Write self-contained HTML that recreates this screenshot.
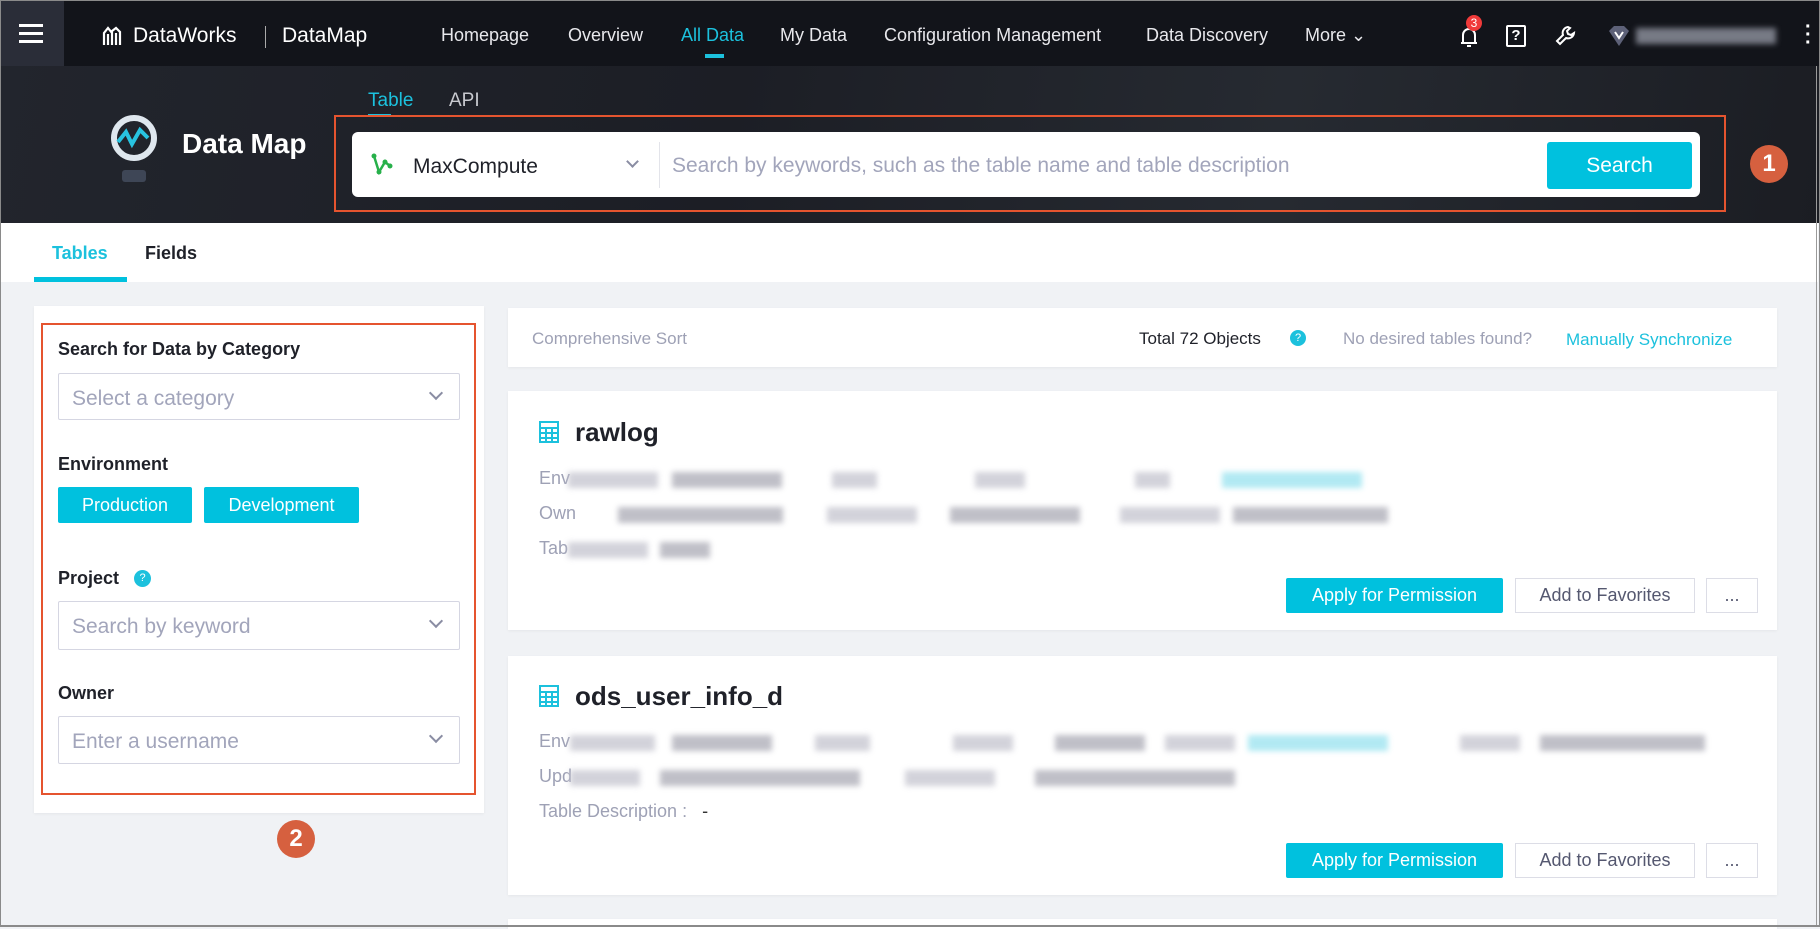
<!DOCTYPE html>
<html><head><meta charset="utf-8"><style>
*{box-sizing:border-box;margin:0;padding:0}
body{width:1820px;height:927px;overflow:hidden;background:#f0f2f5;font-family:"Liberation Sans",sans-serif;position:relative}
.a{position:absolute}
.nav{left:0;top:0;width:1820px;height:66px;background:#12141a}
.navi{top:25px;font-size:18px;color:#e8e8ec;white-space:nowrap}
.banner{left:0;top:66px;width:1820px;height:157px;background:linear-gradient(100deg,#22252d 0%,#1c1e25 40%,#262a31 70%,#1b1d23 100%)}
.lbl{font-size:18px;font-weight:bold;color:#1f2129}
.sel{background:#fff;border:1px solid #d5d6e2;border-radius:2px;font-size:21px;color:#a2a5bb;padding:13px 13px 0}
.chev{position:absolute;right:18px;top:14px;width:10px;height:10px;border-right:2px solid #8a8da3;border-bottom:2px solid #8a8da3;transform:rotate(45deg)}
.btnc{background:#00c1de;color:#fff;font-size:18px;text-align:center}
.card{background:#fff;box-shadow:0 1px 3px rgba(0,0,0,.05)}
.blur{position:absolute;height:16px;background:#c8c8d2;filter:blur(3px);opacity:.8}
.gl{font-size:18px;color:#9ea1b5}
.ob{border:1px solid #dcdde6;background:#fff;color:#555870;font-size:18px;text-align:center}
.circ{border-radius:50%;background:#d6603f;color:#fff;font-weight:bold;font-size:24px;text-align:center}
</style></head><body>
<div class="a nav"></div>
<div class="a" style="left:0;top:0;width:64px;height:66px;background:#2a2d38"></div>
<div class="a" style="left:19px;top:24px;width:24px;height:3px;background:#fff;box-shadow:0 8px 0 #fff,0 16px 0 #fff"></div>
<svg class="a" style="left:101px;top:25px" width="22" height="22" viewBox="0 0 22 22"><path d="M3 20V8l4-5 4 5v12M11 20V6l4-3 4 4v13M7 20V9M15 20V8" stroke="#fff" stroke-width="2.2" fill="none"/></svg>
<div class="a" style="left:133px;top:24px;font-size:21px;color:#fff">DataWorks</div>
<div class="a" style="left:265px;top:26px;width:1px;height:22px;background:#aaa"></div>
<div class="a" style="left:282px;top:24px;font-size:21px;color:#fff">DataMap</div>
<div class="a navi" style="left:441px">Homepage</div>
<div class="a navi" style="left:568px">Overview</div>
<div class="a navi" style="left:681px;color:#1cc1dd">All Data</div>
<div class="a" style="left:705px;top:54px;width:19px;height:4px;background:#1cc1dd"></div>
<div class="a navi" style="left:780px">My Data</div>
<div class="a navi" style="left:884px">Configuration Management</div>
<div class="a navi" style="left:1146px">Data Discovery</div>
<div class="a navi" style="left:1305px">More ⌄</div>
<svg class="a" style="left:1456px;top:24px" width="26" height="26" viewBox="0 0 26 26"><path d="M7 19V11a6 6 0 0 1 12 0v8zM5 19h16M11 22h4" stroke="#fff" stroke-width="2" fill="none"/></svg>
<div class="a" style="left:1466px;top:15px;width:16px;height:16px;border-radius:50%;background:#f03a3a;color:#fff;font-size:12px;text-align:center;line-height:16px">3</div>
<div class="a" style="left:1506px;top:25px;width:20px;height:22px;border:2px solid #fff;border-radius:2px;color:#fff;font-size:15px;font-weight:bold;text-align:center;line-height:18px">?</div>
<svg class="a" style="left:1554px;top:24px" width="24" height="24" viewBox="0 0 24 24"><path d="M14 3a6 6 0 0 0-5 8L3 17l3 3 6-6a6 6 0 0 0 8-5l-3 2-3-1-1-3 3-3z" stroke="#fff" stroke-width="2" fill="none"/></svg>
<svg class="a" style="left:1608px;top:26px" width="22" height="20" viewBox="0 0 22 20"><path d="M1 5l5-5h10l5 5-10 15z" fill="#5d6178"/><path d="M7 6l4 6 4-6" stroke="#fff" stroke-width="2" fill="none"/></svg>
<div class="a" style="left:1636px;top:28px;width:140px;height:16px;background:#777a85;filter:blur(3px)"></div>
<div class="a" style="left:1805px;top:23px;color:#fff;font-size:20px;font-weight:bold;line-height:8px">·<br>·<br>·</div>

<div class="a banner"></div>
<svg class="a" style="left:108px;top:112px" width="56" height="76" viewBox="0 0 56 76"><circle cx="26" cy="26" r="20" stroke="#dfe7ee" stroke-width="6" fill="none"/><path d="M10 30l8-10 6 12 8-14 8 8" stroke="#28c3e0" stroke-width="4" fill="none"/><rect x="14" y="58" width="24" height="12" rx="3" fill="#3e4656"/></svg>
<div class="a" style="left:182px;top:128px;font-size:28px;font-weight:bold;color:#fff">Data Map</div>
<div class="a" style="left:368px;top:90px;font-size:19px;color:#1cc1dd">Table</div>
<div class="a" style="left:368px;top:114px;width:23px;height:3px;background:#1cc1dd"></div>
<div class="a" style="left:449px;top:90px;font-size:19px;color:#c8c9cf">API</div>
<div class="a" style="left:334px;top:115px;width:1392px;height:97px;border:2px solid #e5542f"></div>
<div class="a" style="left:352px;top:132px;width:1348px;height:65px;background:#fff;border-radius:6px"></div>
<svg class="a" style="left:371px;top:152px" width="22" height="24" viewBox="0 0 22 24"><path d="M3 4l5 16 6-10 5 4" stroke="#27b04a" stroke-width="2.5" fill="none"/><circle cx="3" cy="4" r="2.5" fill="#27b04a"/><circle cx="8" cy="20" r="2.5" fill="#27b04a"/><circle cx="14" cy="10" r="2.5" fill="#27b04a"/><circle cx="19" cy="14" r="2.5" fill="#27b04a"/></svg>
<div class="a" style="left:413px;top:155px;font-size:21px;color:#1f2129">MaxCompute</div>
<div class="a" style="left:628px;top:157px;width:9px;height:9px;border-right:2px solid #8a8da3;border-bottom:2px solid #8a8da3;transform:rotate(45deg)"></div>
<div class="a" style="left:659px;top:142px;width:1px;height:46px;background:#e3e4ea"></div>
<div class="a" style="left:672px;top:154px;font-size:21px;color:#a2a5bb">Search by keywords, such as the table name and table description</div>
<div class="a btnc" style="left:1547px;top:142px;width:145px;height:47px;line-height:47px;border-radius:3px;font-size:21px">Search</div>
<div class="a circ" style="left:1750px;top:145px;width:38px;height:38px;line-height:38px">1</div>

<div class="a" style="left:0;top:223px;width:1818px;height:59px;background:#fff"></div>
<div class="a" style="left:52px;top:243px;font-size:18px;font-weight:bold;color:#1cc1dd">Tables</div>
<div class="a" style="left:34px;top:277px;width:93px;height:5px;background:#00c1de"></div>
<div class="a" style="left:145px;top:243px;font-size:18px;font-weight:bold;color:#1f2129">Fields</div>

<div class="a card" style="left:34px;top:306px;width:450px;height:507px"></div>
<div class="a" style="left:41px;top:323px;width:435px;height:472px;border:2px solid #e5542f"></div>
<div class="a lbl" style="left:58px;top:339px">Search for Data by Category</div>
<div class="a sel" style="left:58px;top:373px;width:402px;height:47px">Select a category<span class="chev"></span></div>
<div class="a lbl" style="left:58px;top:454px">Environment</div>
<div class="a btnc" style="left:58px;top:487px;width:134px;height:36px;line-height:36px;border-radius:2px">Production</div>
<div class="a btnc" style="left:204px;top:487px;width:155px;height:36px;line-height:36px;border-radius:2px">Development</div>
<div class="a lbl" style="left:58px;top:568px">Project</div>
<div class="a" style="left:134px;top:570px;width:17px;height:17px;border-radius:50%;background:#1cc1dd;color:#fff;font-size:11px;text-align:center;line-height:17px">?</div>
<div class="a sel" style="left:58px;top:601px;width:402px;height:49px">Search by keyword<span class="chev"></span></div>
<div class="a lbl" style="left:58px;top:683px">Owner</div>
<div class="a sel" style="left:58px;top:716px;width:402px;height:48px">Enter a username<span class="chev"></span></div>
<div class="a circ" style="left:277px;top:820px;width:38px;height:38px;line-height:38px">2</div>

<div class="a card" style="left:508px;top:308px;width:1269px;height:59px"></div>
<div class="a gl" style="left:532px;top:329px;font-size:17px">Comprehensive Sort</div>
<div class="a" style="left:1139px;top:329px;font-size:17px;color:#1f2129">Total 72 Objects</div>
<div class="a" style="left:1290px;top:330px;width:16px;height:16px;border-radius:50%;background:#1cc1dd;color:#fff;font-size:11px;text-align:center;line-height:16px">?</div>
<div class="a gl" style="left:1343px;top:329px;font-size:17px">No desired tables found?</div>
<div class="a" style="left:1566px;top:330px;font-size:17px;color:#1cc1dd">Manually Synchronize</div>

<div class="a card" style="left:508px;top:391px;width:1269px;height:239px"></div>
<svg class="a" style="left:539px;top:421px" width="20" height="22" viewBox="0 0 20 22"><rect x="1" y="1" width="18" height="20" fill="none" stroke="#1cc1dd" stroke-width="2"/><path d="M1 7h18M1 12h18M1 17h18M7 7v14M13 7v14" stroke="#1cc1dd" stroke-width="2"/></svg>
<div class="a" style="left:575px;top:417px;font-size:26px;font-weight:bold;color:#1f2129">rawlog</div>
<div class="a gl" style="left:539px;top:468px">Env</div>
<div class="blur" style="left:568px;top:472px;width:90px"></div><div class="blur" style="left:672px;top:472px;width:110px;background:#b0b0ba"></div><div class="blur" style="left:832px;top:472px;width:45px"></div><div class="blur" style="left:975px;top:472px;width:50px"></div><div class="blur" style="left:1135px;top:472px;width:35px"></div><div class="blur" style="left:1222px;top:472px;width:140px;background:#9ee4f0"></div>
<div class="a gl" style="left:539px;top:503px">Own</div>
<div class="blur" style="left:618px;top:507px;width:165px;background:#b0b0ba"></div><div class="blur" style="left:827px;top:507px;width:90px"></div><div class="blur" style="left:950px;top:507px;width:130px;background:#b0b0ba"></div><div class="blur" style="left:1120px;top:507px;width:100px"></div><div class="blur" style="left:1233px;top:507px;width:155px;background:#b0b0ba"></div>
<div class="a gl" style="left:539px;top:538px">Tab</div>
<div class="blur" style="left:568px;top:542px;width:80px"></div><div class="blur" style="left:660px;top:542px;width:50px;background:#b0b0ba"></div>
<div class="a btnc" style="left:1286px;top:578px;width:217px;height:35px;line-height:35px;border-radius:2px">Apply for Permission</div>
<div class="a ob" style="left:1515px;top:578px;width:180px;height:35px;line-height:33px">Add to Favorites</div>
<div class="a ob" style="left:1706px;top:578px;width:52px;height:35px;line-height:33px">...</div>

<div class="a card" style="left:508px;top:656px;width:1269px;height:239px"></div>
<svg class="a" style="left:539px;top:685px" width="20" height="22" viewBox="0 0 20 22"><rect x="1" y="1" width="18" height="20" fill="none" stroke="#1cc1dd" stroke-width="2"/><path d="M1 7h18M1 12h18M1 17h18M7 7v14M13 7v14" stroke="#1cc1dd" stroke-width="2"/></svg>
<div class="a" style="left:575px;top:681px;font-size:26px;font-weight:bold;color:#1f2129">ods_user_info_d</div>
<div class="a gl" style="left:539px;top:731px">Env</div>
<div class="blur" style="left:570px;top:735px;width:85px"></div><div class="blur" style="left:672px;top:735px;width:100px;background:#b0b0ba"></div><div class="blur" style="left:815px;top:735px;width:55px"></div><div class="blur" style="left:953px;top:735px;width:60px"></div><div class="blur" style="left:1055px;top:735px;width:90px;background:#b0b0ba"></div><div class="blur" style="left:1165px;top:735px;width:70px"></div><div class="blur" style="left:1248px;top:735px;width:140px;background:#9ee4f0"></div><div class="blur" style="left:1460px;top:735px;width:60px"></div><div class="blur" style="left:1540px;top:735px;width:165px;background:#b0b0ba"></div>
<div class="a gl" style="left:539px;top:766px">Upd</div>
<div class="blur" style="left:570px;top:770px;width:70px"></div><div class="blur" style="left:660px;top:770px;width:200px;background:#b0b0ba"></div><div class="blur" style="left:905px;top:770px;width:90px"></div><div class="blur" style="left:1035px;top:770px;width:200px;background:#b0b0ba"></div>
<div class="a gl" style="left:539px;top:801px">Table Description :&nbsp;&nbsp; <span style="color:#333">-</span></div>
<div class="a btnc" style="left:1286px;top:843px;width:217px;height:35px;line-height:35px;border-radius:2px">Apply for Permission</div>
<div class="a ob" style="left:1515px;top:843px;width:180px;height:35px;line-height:33px">Add to Favorites</div>
<div class="a ob" style="left:1706px;top:843px;width:52px;height:35px;line-height:33px">...</div>
<div class="a card" style="left:508px;top:919px;width:1269px;height:10px"></div>

<div class="a" style="left:1816px;top:66px;width:1px;height:861px;background:#9a9a9a"></div>
<div class="a" style="left:0;top:0;width:1820px;height:927px;border:1px solid #8a8a8a;border-bottom:2px solid #8a8a8a"></div>
</body></html>
